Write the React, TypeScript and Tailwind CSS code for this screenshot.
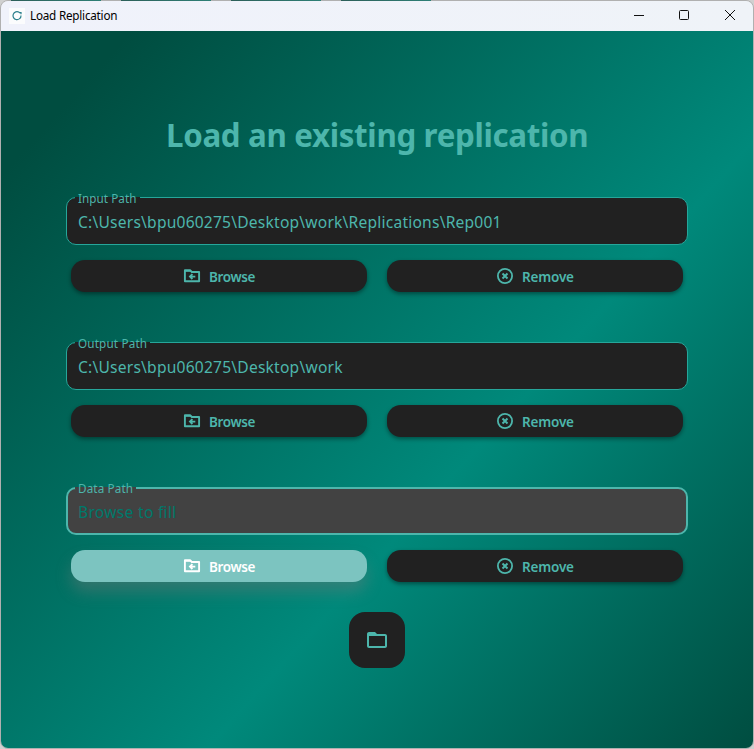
function BrowseIcon() {
  return (
    <svg viewBox="0 0 18 18" className="size-[18px]" fill="none" stroke="currentColor">
      <path d="M1.9 3.5V14.2H16.1V5H8.8L7.3 3.3H1.9Z" strokeWidth="1.9" strokeLinejoin="round" />
      <path d="M1.8 4H8" strokeWidth="1.6" />
      <path d="M12.3 9.6H7M9.4 7.2L7 9.6L9.4 12" strokeWidth="1.9" />
    </svg>
  );
}

function RemoveIcon() {
  return (
    <svg viewBox="0 0 18 18" className="size-[18px]" fill="none" stroke="currentColor">
      <circle cx="9" cy="9" r="7.1" strokeWidth="1.8" />
      <path d="M6.5 6.5L11.5 11.5M11.5 6.5L6.5 11.5" strokeWidth="2" />
    </svg>
  );
}

function Button({ kind, active = false }: { kind: "browse" | "remove"; active?: boolean }) {
  const look = active
    ? "bg-[#7cc4c0] text-white shadow-[0_10px_15px_rgba(120,120,120,0.4)]"
    : "bg-[#212121] text-[#4db6ac] shadow-[0_2px_4px_rgba(0,0,0,0.4)]";
  const browse = kind === "browse";
  return (
    <button className={`flex h-8 w-[296px] items-center justify-center gap-2 rounded-[14px] ${look}`}>
      {browse ? <BrowseIcon /> : <RemoveIcon />}
      <svg className={`h-5 overflow-visible ${browse ? "w-[47px]" : "w-[52px]"}`} fill="currentColor">
        <text x="0" y="16" fontSize="13.5" fontWeight="600" textLength={browse ? "46.5" : "52"}>{browse ? "Browse" : "Remove"}</text>
      </svg>
    </button>
  );
}

type FieldProps = { label: string; value: string; notch: string; labelWidth: string; valueWidth: string; focused?: boolean };

function PathField({ label, value, notch, labelWidth, valueWidth, focused = false }: FieldProps) {
  return (
    <section className="h-[145px]">
      <div
        className={`relative flex h-12 items-center rounded-[10px] ${
          focused ? "border-2 border-[#4db6ac] bg-[#424242] pl-[10px] text-[#00796b]" : "border border-[#26a69a] bg-[#212121] pl-[11px] text-[#4db6ac]"
        }`}
      >
        <span className={`absolute h-[2px] ${focused ? "left-[7px] -top-[2px] bg-[#424242]" : "left-2 -top-px bg-[#212121]"} ${notch}`} />
        <svg className={`absolute overflow-visible ${focused ? "-top-[10px] left-[10px]" : "-top-[9px] left-[11px]"}`} width="90" height="20" fill="#4db6ac">
          <text x="0" y="14" textLength={labelWidth} fontSize="11.7">{label}</text>
        </svg>
        <svg className="h-6 w-[500px] overflow-visible" fill="currentColor">
          <text x="0" y="19" textLength={valueWidth} fontSize="15.6">{value}</text>
        </svg>
      </div>
      <div className="mt-[15px] flex gap-5 px-[5px]">
        <Button kind="browse" active={focused} />
        <Button kind="remove" />
      </div>
    </section>
  );
}

export default function App() {
  return (
    <div className="relative h-[749px] w-[754px] overflow-hidden bg-[#d0d0d0] font-['Noto_Sans','Open_Sans',sans-serif]">
      <div className="flex h-full flex-col overflow-hidden rounded-lg border border-[#b0b0b0]">
        <header className="flex h-[30px] shrink-0 items-center bg-linear-to-r from-[#f0f2fb] to-[#eff3f8] pl-2 text-black">
          <span className="flex size-4 items-center justify-center bg-[#fbfcfd]">
            <svg viewBox="0 0 16 16" className="size-4" fill="none" stroke="#2b7f8c" strokeWidth="1.2">
              <path d="M12 7.5A4 4 0 1 1 10.2 4.3M10 4.7h2V6.3" />
            </svg>
          </span>
          <svg className="ml-[5px] h-5 w-[90px]" fill="currentColor">
            <text x="0" y="14" fontSize="11.7" textLength="87.5">Load Replication</text>
          </svg>
          <svg className="ml-auto h-[30px] w-[130px]" fill="none" stroke="#111">
            <path d="M11 14.5h10" />
            <rect x="56.5" y="9.5" width="9" height="9" rx="1" />
            <path d="M102 9l10 10M112 9l-10 10" />
          </svg>
        </header>
        <main className="flex flex-1 flex-col bg-[linear-gradient(132deg,#004d40_97px,#00897b_633px,#004d40_1040px)] px-[65px]">
          <h1 className="mt-[81px] flex h-[85px] justify-center text-[#4db6ac]">
            <svg className="h-[60px] w-[422px] overflow-visible" fill="currentColor">
              <text x="0" y="35" fontSize="31.3" fontWeight="700" textLength="422.5">Load an existing replication</text>
            </svg>
          </h1>
          <PathField label="Input Path" value={"C:\\Users\\bpu060275\\Desktop\\work\\Replications\\Rep001"} notch="w-[65px]" labelWidth="58.5" valueWidth="423.5" />
          <PathField label="Output Path" value={"C:\\Users\\bpu060275\\Desktop\\work"} notch="w-[75px]" labelWidth="69" valueWidth="264.5" />
          <PathField label="Data Path" value="Browse to fill" notch="w-[61px]" labelWidth="55" valueWidth="98" focused />
          <button className="-mt-[20px] flex size-14 items-center justify-center self-center rounded-2xl bg-[#212121] text-[#4db6ac]">
            <svg viewBox="0 0 24 24" className="size-6" fill="currentColor">
              <path d="M20 6h-8l-2-2H4c-1.1 0-1.99.9-1.99 2L2 18c0 1.1.9 2 2 2h16c1.1 0 2-.9 2-2V8c0-1.1-.9-2-2-2zm0 12H4V8h16v10z" />
            </svg>
          </button>
        </main>
      </div>
      {/* Slivers of the window behind this one */}
      <div className="absolute top-0 left-[11px] flex gap-5">
        {[0, 1, 2, 3].map((i) => (
          <span key={i} className="h-px w-[90px] bg-linear-to-r from-[#2c5f59] to-[#2d7f76]" />
        ))}
      </div>
    </div>
  );
}
